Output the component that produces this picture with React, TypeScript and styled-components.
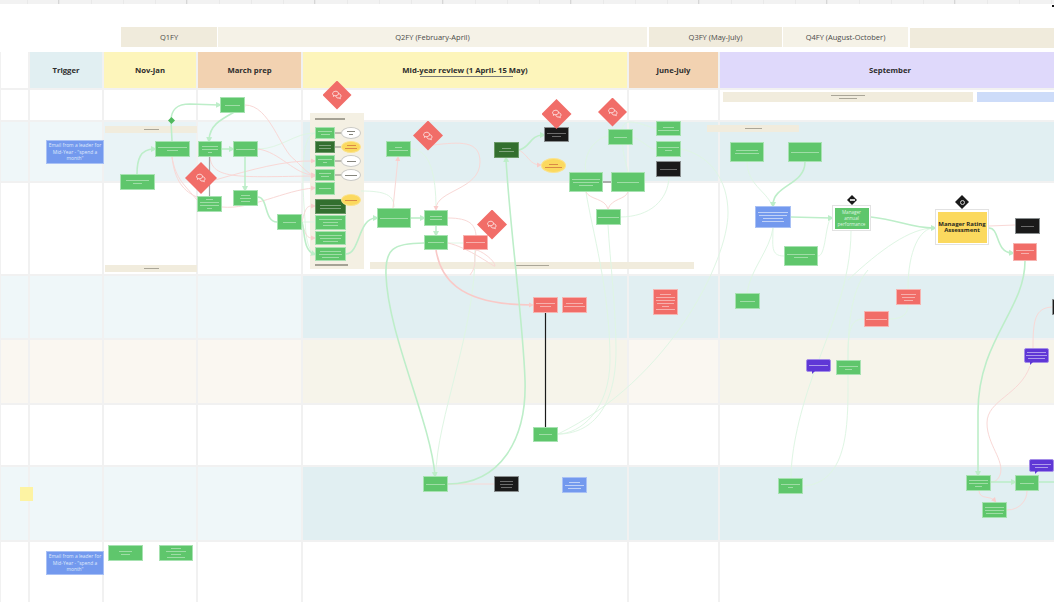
import styled, { createGlobalStyle } from "styled-components";

const GlobalStyle = createGlobalStyle`
  html, body {
    margin: 0;
    padding: 0;
    background: #ffffff;
    font-family: "Open Sans", "Liberation Sans", sans-serif;
  }
`;

const Page = styled.div`
  position: relative;
  width: 1054px;
  height: 602px;
  overflow: hidden;
  background: #ffffff;
`;

const Ruler = styled.div`
  height: 3.5px;
  background-color: #f2f2f2;
  background-image:
    repeating-linear-gradient(90deg, transparent 0 58px, #d6d6d6 58px 59.5px, transparent 59.5px 128px),
    repeating-linear-gradient(90deg, transparent 0 27px, #e9e9e9 27px 28px, transparent 28px 32px);
`;

const QuarterRow = styled.div`
  display: flex;
  align-items: flex-start;
  height: 24.5px;
  margin-top: 23.5px;
  padding-left: 121px;
`;

const Quarter = styled.div<{ $w: number; $gap: number; $tone: "deep" | "pale"; $drop?: boolean }>`
  flex: none;
  width: ${(p) => p.$w}px;
  height: 20px;
  margin-right: ${(p) => p.$gap}px;
  margin-top: ${(p) => (p.$drop ? 1 : 0)}px;
  display: flex;
  align-items: center;
  justify-content: center;
  background: ${(p) => (p.$tone === "deep" ? "#f0ebdc" : "#f5f2e7")};
  color: #4a4a48;
  font-size: 7.5px;
  white-space: nowrap;
`;

const Board = styled.div`
  display: grid;
  grid-template-columns: 27px 72px 92px 103px 324px 89px 340px;
  grid-template-rows: 36px 30px 59px 91px 62px 63px 60px 73px 60px;
  gap: 2px;
  padding: 0 0 0 1px;
  height: 550px;
  background: #f1f1f1;
`;

const HeaderCell = styled.div<{ $bg: string }>`
  display: flex;
  align-items: center;
  justify-content: center;
  background: ${(p) => p.$bg};
  color: #2d2d2d;
  font-size: 7.7px;
  font-weight: 700;
  white-space: nowrap;
`;

const UnderlinedTitle = styled.span`
  position: relative;

  &::after {
    content: "";
    position: absolute;
    left: 18px;
    right: 15px;
    bottom: -2.5px;
    height: 1px;
    background: #777777;
  }
`;

const cellTones = {
  white: "#ffffff",
  tealSoft: "#eff7f9",
  tealMid: "#e9f3f6",
  teal: "#e1eff2",
  sandSoft: "#faf7f1",
  sand: "#f6f4ea",
};

type CellTone = keyof typeof cellTones;

const Cell = styled.div<{ $tone: CellTone }>`
  background: ${(p) => cellTones[p.$tone]};
`;

const Diagram = styled.div`
  position: absolute;
  inset: 0;
`;

const Wires = styled.svg`
  position: absolute;
  left: 0;
  top: 0;
`;

const Panel = styled.div<{ $x: number; $y: number; $w: number; $h: number }>`
  position: absolute;
  left: ${(p) => p.$x}px;
  top: ${(p) => p.$y}px;
  width: ${(p) => p.$w}px;
  height: ${(p) => p.$h}px;
  background: #f4f0e3;
`;

const BeigeBar = styled.div<{ $x: number; $y: number; $w: number; $h: number; $blue?: boolean }>`
  position: absolute;
  left: ${(p) => p.$x}px;
  top: ${(p) => p.$y}px;
  width: ${(p) => p.$w}px;
  height: ${(p) => p.$h}px;
  display: flex;
  flex-direction: column;
  align-items: center;
  justify-content: center;
  gap: 1.5px;
  background: ${(p) => (p.$blue ? "#cddcf9" : "#f1ecdd")};
`;

const GreyLine = styled.div<{ $w: number }>`
  width: ${(p) => p.$w}px;
  height: 1px;
  background: #aaa698;
`;

const PanelRule = styled.div<{ $x: number; $y: number; $w: number }>`
  position: absolute;
  left: ${(p) => p.$x}px;
  top: ${(p) => p.$y}px;
  width: ${(p) => p.$w}px;
  height: 1.5px;
  background: #a5a295;
`;

const tones = {
  green: { bg: "#5fc66c", border: "#a7e2b1", bar: "rgba(255,255,255,.4)" },
  dark: { bg: "#336f2f", border: "#6b9a68", bar: "rgba(255,255,255,.38)" },
  red: { bg: "#f16d68", border: "#f7b4b1", bar: "rgba(255,255,255,.45)" },
  black: { bg: "#1a1a1a", border: "#8a8f90", bar: "rgba(255,255,255,.36)" },
  blue: { bg: "#7399ee", border: "#a9c1f5", bar: "rgba(255,255,255,.55)" },
  purple: { bg: "#5f37d6", border: "#a58ee8", bar: "rgba(255,255,255,.5)" },
  amber: { bg: "#fbd95e", border: "#fbe38d", bar: "#d98a46" },
  white: { bg: "#ffffff", border: "#c9c9c5", bar: "#85857d" },
};

type Tone = keyof typeof tones;
type Shape = "box" | "oval" | "bubble";

const Node = styled.div<{ $x: number; $y: number; $w: number; $h: number; $tone: Tone; $shape: Shape }>`
  position: absolute;
  box-sizing: border-box;
  left: ${(p) => p.$x}px;
  top: ${(p) => p.$y}px;
  width: ${(p) => p.$w}px;
  height: ${(p) => p.$h}px;
  display: flex;
  flex-direction: column;
  align-items: center;
  justify-content: center;
  gap: 2px;
  background: ${(p) => tones[p.$tone].bg};
  border: 0.7px solid ${(p) => tones[p.$tone].border};
  border-radius: ${(p) => (p.$shape === "oval" ? "50%" : p.$shape === "bubble" ? "2px" : "0")};

  &::after {
    content: "";
    display: ${(p) => (p.$shape === "bubble" ? "block" : "none")};
    position: absolute;
    left: 5px;
    bottom: -3px;
    width: 3px;
    height: 3px;
    background: ${(p) => tones[p.$tone].bg};
    clip-path: polygon(0 0, 100% 0, 0 100%);
  }
`;

const Bar = styled.span<{ $w: number; $color: string }>`
  display: block;
  flex: none;
  width: ${(p) => p.$w}%;
  height: 1px;
  background: ${(p) => p.$color};
`;

const TriggerNote = styled.div<{ $y: number }>`
  position: absolute;
  box-sizing: border-box;
  display: flex;
  align-items: center;
  justify-content: center;
  left: 46px;
  top: ${(p) => p.$y}px;
  width: 58px;
  height: 24px;
  padding: 0 1px;
  background: #7399ee;
  border: 0.7px solid #a9c1f5;
  color: #dfe8fb;
  font-size: 4.9px;
  line-height: 6.5px;
  text-align: center;
`;

const Sticky = styled.div`
  position: absolute;
  left: 20px;
  top: 487px;
  width: 13px;
  height: 14px;
  background: #fdf3a3;
`;

const Frame = styled.div<{ $x: number; $y: number; $w: number; $h: number }>`
  position: absolute;
  box-sizing: border-box;
  left: ${(p) => p.$x}px;
  top: ${(p) => p.$y}px;
  width: ${(p) => p.$w}px;
  height: ${(p) => p.$h}px;
  padding: 1.5px;
  display: flex;
  background: #ffffff;
  border: 1.2px solid #e2e2e2;
`;

const FrameTile = styled.div<{ $yellow?: boolean }>`
  flex: 1;
  display: flex;
  align-items: center;
  justify-content: center;
  text-align: center;
  background: ${(p) => (p.$yellow ? "#fbd95e" : "#5fc66c")};
  color: ${(p) => (p.$yellow ? "#2a2a20" : "#dff5e2")};
  font-size: ${(p) => (p.$yellow ? 6 : 4.6)}px;
  font-weight: ${(p) => (p.$yellow ? 700 : 400)};
  line-height: ${(p) => (p.$yellow ? 6.5 : 6.2)}px;
`;

const Diamond = styled.div<{ $cx: number; $cy: number; $r: number; $bg: string }>`
  position: absolute;
  left: ${(p) => p.$cx - p.$r}px;
  top: ${(p) => p.$cy - p.$r}px;
  width: ${(p) => p.$r * 2}px;
  height: ${(p) => p.$r * 2}px;
  display: flex;
  align-items: center;
  justify-content: center;
  background: ${(p) => p.$bg};
  clip-path: polygon(50% 0, 100% 50%, 50% 100%, 0 50%);
`;

const Dash = styled.span`
  width: 5px;
  height: 1.5px;
  background: #cfcfcf;
`;

const Ring = styled.span`
  width: 3px;
  height: 3px;
  border: 1px solid #cfcfcf;
  border-radius: 50%;
`;

const CornerDot = styled.div`
  position: absolute;
  left: 1052px;
  top: 5px;
  width: 2px;
  height: 2px;
  background: #111111;
`;

const ChatIcon = () => (
  <svg width="10" height="10" viewBox="0 0 13 13" fill="none" stroke="#ffffff" strokeWidth="1" strokeLinejoin="round">
    <path d="M5 1.6c2 0 3.400 1.300 3.400 2.900S7 7.400 5 7.400H2.900L1.900 8.400V6.600C1 6 .8 5.200.8 4.500.8 2.900 3 1.600 5 1.600Z" />
    <path d="M8.700 4.800c1.700.2 3 1.400 3 2.900 0 .8-.4 1.500-1 2v1.700l-1.300-1h-1.600C6.500 10.400 5.300 9.500 5 8" />
  </svg>
);

const headers: { label: string; bg: string; underlined?: boolean }[] = [
  { label: "", bg: "#ffffff" },
  { label: "Trigger", bg: "#e1eff2" },
  { label: "Nov-Jan", bg: "#fdf5bb" },
  { label: "March prep", bg: "#f2d2b1" },
  { label: "Mid-year review (1 April- 15 May)", bg: "#fdf5bb", underlined: true },
  { label: "June-July", bg: "#f2d2b1" },
  { label: "September", bg: "#dfd9fb" },
];

const rows: CellTone[][] = [
  ["white", "white", "white", "white", "white", "white", "white"],
  ["tealSoft", "tealSoft", "tealMid", "tealSoft", "teal", "teal", "teal"],
  ["white", "white", "white", "white", "white", "white", "white"],
  ["tealSoft", "tealSoft", "tealSoft", "tealSoft", "teal", "teal", "teal"],
  ["sandSoft", "sandSoft", "sandSoft", "sandSoft", "sand", "sandSoft", "sand"],
  ["white", "white", "white", "white", "white", "white", "white"],
  ["tealSoft", "tealSoft", "tealSoft", "tealSoft", "teal", "teal", "teal"],
  ["white", "white", "white", "white", "white", "white", "white"],
];

const bars = [
  { x: 105, y: 126, w: 92, h: 7, lines: [15] },
  { x: 105, y: 265, w: 92, h: 7, lines: [15] },
  { x: 370, y: 262, w: 324, h: 7, lines: [33] },
  { x: 707, y: 125, w: 92, h: 7, lines: [17] },
  { x: 723, y: 92, w: 250, h: 10, lines: [34, 18] },
];

type NodeData = { x: number; y: number; w: number; h: number; tone: Tone; shape?: Shape; lines: number[] };

const box = (x: number, y: number, w: number, h: number, tone: Tone, lines: number[], shape: Shape = "box"): NodeData => ({
  x, y, w, h, tone, lines, shape,
});

const nodes: NodeData[] = [
  box(220, 97, 25, 16, "green", [65]),
  box(155, 141, 35, 16, "green", [85, 35]),
  box(120, 174, 35, 16, "green", [70, 30]),
  box(198, 141, 24, 16, "green", [75, 75, 20]),
  box(233, 141, 25, 16, "green", [80]),
  box(197, 196, 25, 16, "green", [30, 80, 80, 25]),
  box(233, 190, 25, 16, "green", [40, 50, 40]),
  box(277, 214, 25, 16, "green", [55]),

  box(315, 127, 20, 12, "green", [75, 50]),
  box(315, 141, 20, 12, "dark", [70, 70]),
  box(315, 155, 20, 12, "green", [75, 25]),
  box(315, 169, 20, 12, "green", [70, 40]),
  box(315, 182, 20, 13, "green", [70]),
  box(315, 199, 31, 15, "dark", [70, 70]),
  box(315, 215, 31, 15, "green", [80, 50, 50]),
  box(315, 231, 31, 14, "green", [80, 70, 50]),
  box(315, 247, 31, 14, "green", [70, 80, 60]),

  box(341, 127, 20, 12, "white", [45, 20], "oval"),
  box(341, 141, 20, 12, "amber", [50, 70], "oval"),
  box(341, 155, 20, 12, "white", [50], "oval"),
  box(341, 169, 20, 12, "white", [70], "oval"),
  box(341, 194, 20, 12, "amber", [70], "oval"),

  box(386, 141, 25, 16, "green", [30, 85]),
  box(494, 142, 25, 16, "dark", [40, 65]),
  box(544, 127, 25, 15, "black", [85, 40]),
  box(541, 158, 25, 15, "amber", [40, 70], "oval"),
  box(608, 129, 25, 16, "green", [60]),
  box(656, 121, 25, 15, "green", [50, 90]),
  box(656, 141, 25, 16, "green", [90, 30]),
  box(656, 161, 25, 16, "black", [70]),
  box(569, 172, 34, 20, "green", [85, 80, 45]),
  box(611, 172, 34, 20, "green", [70]),
  box(596, 209, 25, 16, "green", [90]),
  box(377, 208, 34, 20, "green", [90]),
  box(424, 210, 24, 16, "green", [55, 55]),
  box(424, 235, 24, 15, "green", [70]),
  box(463, 235, 25, 15, "red", [85]),

  box(730, 142, 34, 20, "green", [70, 75]),
  box(788, 142, 34, 20, "green", [85]),
  box(755, 206, 36, 22, "blue", [90, 80, 60, 65]),
  box(1015, 218, 25, 16, "black", [60]),
  box(1013, 243, 24, 18, "red", [80, 40]),
  box(784, 246, 34, 20, "green", [85, 45]),

  box(533, 297, 25, 16, "red", [85, 45]),
  box(562, 297, 25, 16, "red", [75, 95]),
  box(653, 289, 25, 26, "red", [45, 85, 80, 75, 30, 85]),
  box(533, 427, 25, 15, "green", [60]),
  box(423, 476, 25, 16, "green", [80]),
  box(494, 476, 25, 16, "black", [55, 60, 45]),
  box(562, 477, 25, 16, "blue", [45, 85, 55]),

  box(735, 293, 25, 16, "green", [65]),
  box(896, 289, 25, 16, "red", [65, 60, 35]),
  box(864, 311, 25, 16, "red", [90]),
  box(806, 359, 25, 13, "purple", [85], "bubble"),
  box(836, 360, 25, 15, "green", [80, 30]),
  box(1024, 348, 25, 15, "purple", [85, 90, 75], "bubble"),
  box(1052, 299, 10, 16, "black", []),
  box(1029, 459, 25, 13, "purple", [85, 60], "bubble"),
  box(778, 478, 25, 16, "green", [80, 20]),
  box(966, 475, 25, 16, "green", [80, 80, 30]),
  box(1015, 475, 24, 16, "green", [60]),
  box(982, 502, 25, 16, "green", [85, 85, 70]),

  box(108, 545, 35, 16, "green", [40, 30]),
  box(159, 545, 34, 16, "green", [30, 60, 30, 55]),
];

const redDiamonds = [
  { cx: 337, cy: 95, r: 14.5 },
  { cx: 201, cy: 178, r: 16 },
  { cx: 428, cy: 135.5, r: 15 },
  { cx: 556.5, cy: 114, r: 15 },
  { cx: 612.5, cy: 112, r: 14.5 },
  { cx: 492, cy: 224.5, r: 15 },
];

const greenArrows = [
  "M172 141 L171 121 C171 110 176 104 190 104 L219 105",
  "M137 174 C137 160 140 149 154 149",
  "M245 106 C225 118 210 122 209 140",
  "M222 149 L232 149",
  "M245 157 L245 189",
  "M302 222 C305 232 303 250 314 254",
  "M346 254 C360 254 358 218 376 218",
  "M411 218 L423 218",
  "M436 226 L436 234",
  "M424 243 C392 243 385 250 386 275 C388 335 430 420 435 475",
  "M448 484 C500 484 527 440 525 380 C523 320 510 230 506 159",
  "M519 150 C530 148 530 135 543 135",
  "M791 217 L831 218",
  "M871 217 C900 220 910 228 934 228",
  "M805 162 C805 185 773 185 773 205",
  "M989 228 C1000 228 995 252 1012 253",
  "M1025 261 C1025 310 978 340 978 412 L978 474",
  "M991 482 L1014 482",
];

const greenPlain = [
  "M258 197 C268 197 264 222 277 222",
  "M1039 482 L1054 482",
];

const thinGreen = [
  "M411 149 C430 149 436 175 436 209",
  "M258 149 C280 149 295 133 314 133",
  "M315 133 C300 136 302 180 305 220 C306 240 308 250 315 254",
  "M302 222 L314 222",
  "M361 191 C385 191 394 195 394 207",
  "M448 243 L463 243",
  "M475 250 C476 330 436 420 436 475",
  "M620 217 C650 217 668 200 669 177",
  "M608 136 C590 140 583 160 586 172",
  "M586 192 C592 230 610 290 610 360 C610 410 580 434 558 434",
  "M608 225 C610 260 616 310 616 350 C616 410 590 434 558 434",
  "M681 149 C710 155 728 180 728 213 C728 260 670 380 558 434",
  "M628 172 C620 140 618 122 630 122 C640 122 650 128 656 128",
  "M633 137 C645 142 650 150 656 149",
  "M773 228 C773 245 770 256 784 256",
  "M773 228 C770 250 750 270 747 293",
  "M818 256 C826 256 825 225 831 218",
  "M747 162 C748 185 765 190 772 205",
  "M851 231 C851 280 830 330 815 370 C800 410 791 450 791 478",
  "M848 280 C880 250 910 228 934 228",
  "M848 360 C848 330 850 290 868 270",
  "M908 289 C908 250 920 228 934 228",
  "M908 305 C908 316 900 319 889 319",
  "M864 319 C850 319 848 330 848 360",
  "M848 375 C848 420 850 483 803 486",
];

const pinkArrows = [
  "M245 105 C270 105 280 150 295 160 C305 170 310 175 314 175",
  "M258 149 C280 152 295 175 314 175",
  "M210 157 C212 180 240 177 314 176",
  "M215 180 C250 170 285 160 314 161",
  "M222 207 C250 210 285 190 314 188",
  "M302 222 C306 205 308 206 314 206",
  "M302 222 C306 238 308 238 314 238",
  "M393 208 L398 158",
  "M433 145 C460 142 480 140 480 162 C480 190 436 190 436 209",
  "M519 150 C528 155 530 165 540 165",
  "M979 491 C980 500 990 495 995 501",
];

const pinkPlain = [
  "M172 157 C174 175 180 190 197 197",
  "M172 157 C176 180 185 185 197 200",
  "M448 218 C470 218 475 225 476 235",
  "M586 192 C590 200 605 198 608 209",
  "M628 192 C625 200 612 198 608 209",
  "M448 243 C470 248 495 268 495 266 C495 260 480 250 476 250 C473 258 478 265 470 275",
  "M448 484 L494 484",
  "M1052 307 C1035 308 1033 320 1033 348",
  "M1030 366 C1020 395 987 400 987 423 C987 445 1005 460 1000 475 C998 480 995 482 991 482",
  "M1007 510 C1020 510 1027 500 1027 491",
  "M989 226 L1015 225",
];

const App = () => {
  return (
    <Page>
      <GlobalStyle />
      <Ruler />
      <QuarterRow>
        <Quarter $w={96} $gap={1} $tone="deep">Q1FY</Quarter>
        <Quarter $w={429} $gap={2} $tone="pale">Q2FY (February-April)</Quarter>
        <Quarter $w={133} $gap={1} $tone="deep">Q3FY (May-July)</Quarter>
        <Quarter $w={125} $gap={2} $tone="pale">Q4FY (August-October)</Quarter>
        <Quarter $w={144} $gap={0} $tone="deep" $drop />
      </QuarterRow>

      <Board>
        {headers.map((h, i) => (
          <HeaderCell key={i} $bg={h.bg}>
            {h.underlined ? <UnderlinedTitle>{h.label}</UnderlinedTitle> : h.label}
          </HeaderCell>
        ))}
        {rows.map((row, r) =>
          row.map((tone, c) => <Cell key={`${r}-${c}`} $tone={tone} />),
        )}
      </Board>

      <Diagram>
        <Panel $x={310} $y={113} $w={54} $h={156} />
        <PanelRule $x={315} $y={118} $w={30} />
        <PanelRule $x={315} $y={264} $w={33} />
        {bars.map((b) => (
          <BeigeBar key={`${b.x}-${b.y}`} $x={b.x} $y={b.y} $w={b.w} $h={b.h}>
            {b.lines.map((w, i) => (
              <GreyLine key={i} $w={w} />
            ))}
          </BeigeBar>
        ))}
        <BeigeBar $x={977} $y={92} $w={77} $h={10} $blue />

        <Wires width="1054" height="602" viewBox="0 0 1054 602" fill="none">
          <defs>
            <marker id="arrow-green" markerUnits="userSpaceOnUse" markerWidth="7" markerHeight="7" refX="3" refY="3.5" orient="auto">
              <path d="M0 0.5 L6 3.5 L0 6.5 Z" fill="#bdeec9" />
            </marker>
            <marker id="arrow-pink" markerUnits="userSpaceOnUse" markerWidth="6" markerHeight="6" refX="3" refY="3" orient="auto">
              <path d="M0 0.5 L5 3 L0 5.5 Z" fill="#f9cdcb" />
            </marker>
          </defs>
          {thinGreen.map((d) => (
            <path key={d} d={d} stroke="#dff6e4" strokeWidth="1" />
          ))}
          {pinkPlain.map((d) => (
            <path key={d} d={d} stroke="#f9d8d6" strokeWidth="1" />
          ))}
          {pinkArrows.map((d) => (
            <path key={d} d={d} stroke="#f9d8d6" strokeWidth="1" markerEnd="url(#arrow-pink)" />
          ))}
          <path d="M436 250 C440 275 455 305 532 305" stroke="#f9c9c7" strokeWidth="1.6" markerEnd="url(#arrow-pink)" />
          {greenPlain.map((d) => (
            <path key={d} d={d} stroke="#bdeec9" strokeWidth="1.6" />
          ))}
          {greenArrows.map((d) => (
            <path key={d} d={d} stroke="#bdeec9" strokeWidth="1.6" markerEnd="url(#arrow-green)" />
          ))}
          <path d="M545.5 313 L545.5 427" stroke="#1a1a1a" strokeWidth="1.2" />
          <path d="M603 182 L611 182" stroke="#666666" strokeWidth="1" />
          <path d="M209.5 157 L209.5 196" stroke="#a5a5a5" strokeWidth="1.2" />
          <path d="M335 133 L341 133 M335 147 L341 147 M335 161 L341 161 M335 175 L341 175" stroke="#8c8c84" strokeWidth="1.2" />
        </Wires>

        {nodes.map((n) => (
          <Node
            key={`${n.x}-${n.y}`}
            $x={n.x}
            $y={n.y}
            $w={n.w}
            $h={n.h}
            $tone={n.tone}
            $shape={n.shape ?? "box"}
          >
            {n.lines.map((w, i) => (
              <Bar key={i} $w={w} $color={tones[n.tone].bar} />
            ))}
          </Node>
        ))}

        <TriggerNote $y={140}>Email from a leader for Mid-Year - "spend a month"</TriggerNote>
        <TriggerNote $y={551}>Email from a leader for Mid-Year - "spend a month"</TriggerNote>
        <Sticky />

        <Frame $x={832} $y={205} $w={39} $h={26}>
          <FrameTile>Manager annual performance</FrameTile>
        </Frame>
        <Frame $x={935} $y={209} $w={54} $h={36}>
          <FrameTile $yellow>Manager Rating Assessment</FrameTile>
        </Frame>

        <Diamond $cx={171.5} $cy={120.5} $r={3.5} $bg="#4fb95e" />
        {redDiamonds.map((d) => (
          <Diamond key={d.cx} $cx={d.cx} $cy={d.cy} $r={d.r} $bg="#f16d68">
            <ChatIcon />
          </Diamond>
        ))}
        <Diamond $cx={852} $cy={200} $r={5} $bg="#1a1a1a">
          <Dash />
        </Diamond>
        <Diamond $cx={962} $cy={202} $r={7} $bg="#1a1a1a">
          <Ring />
        </Diamond>
        <CornerDot />
      </Diagram>
    </Page>
  );
};

export default App;
